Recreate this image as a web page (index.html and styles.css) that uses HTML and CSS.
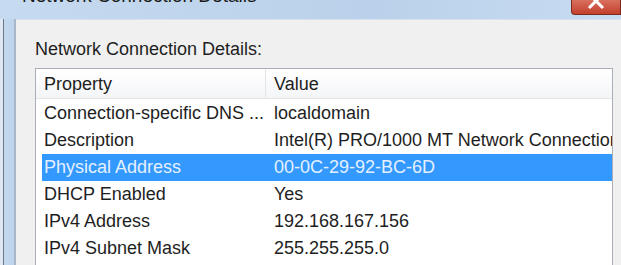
FILE: index.html
```html
<!DOCTYPE html>
<html lang="en">
<head>
  <meta charset="UTF-8">
  <title>Network Connection Details</title>
  <link rel="stylesheet" href="styles.css">
</head>
<body>
  <div class="window">
    <div class="titlebar">
      <span class="title">Network Connection Details</span>
      <div class="close-btn">
        <svg width="20" height="12" viewBox="0 0 20 12">
          <path d="M3 -6 L17 8 M17 -6 L3 8" stroke="#fff" stroke-width="3"/>
        </svg>
      </div>
    </div>
    <div class="frame">
      <div class="frame-side"></div>
      <div class="panel">
        <div class="caption">Network Connection Details:</div>
        <div class="list">
          <div class="list-head">
            <div class="col-prop">Property</div>
            <div class="col-val">Value</div>
          </div>
          <div class="list-body">
            <div class="row"><div class="col-prop">Connection-specific DNS ...</div><div class="col-val">localdomain</div></div>
            <div class="row"><div class="col-prop">Description</div><div class="col-val">Intel(R) PRO/1000 MT Network Connection</div></div>
            <div class="row selected"><div class="col-prop">Physical Address</div><div class="col-val">00-0C-29-92-BC-6D</div></div>
            <div class="row"><div class="col-prop">DHCP Enabled</div><div class="col-val">Yes</div></div>
            <div class="row"><div class="col-prop">IPv4 Address</div><div class="col-val">192.168.167.156</div></div>
            <div class="row"><div class="col-prop">IPv4 Subnet Mask</div><div class="col-val">255.255.255.0</div></div>
          </div>
        </div>
      </div>
    </div>
  </div>
</body>
</html>
```

FILE: styles.css
```css
/* Reset */
* {
  box-sizing: border-box;
  margin: 0;
  padding: 0;
}

body {
  font-family: 'Liberation Sans', Arial, sans-serif;
  color: #1e1e1e;
  background-color: #f0f0f0;
  width: 621px;
  height: 265px;
  overflow: hidden;
}

.window {
  display: flex;
  flex-direction: column;
  height: 265px;
  background: linear-gradient(to right, #c6daf0, #b9d1ea 60%, #c8dcf1);
}

/* Title bar */
.titlebar {
  display: flex;
  height: 19px;
  overflow: hidden;
  padding-left: 22px;
}

.title {
  font-size: 19px;
  line-height: 20px;
  margin-top: -14px;
  color: #1a1a1a;
  white-space: nowrap;
}

.close-btn {
  margin-left: auto;
  width: 50px;
  height: 15px;
  background: linear-gradient(to bottom, #d9705f, #c2402c);
  border: 1px solid #7c2a1f;
  border-top: none;
  border-radius: 0 0 0 4px;
  display: flex;
  justify-content: center;
  align-items: flex-start;
}

/* Frame */
.frame {
  flex: 1;
  display: flex;
  min-height: 0;
}

.frame-side {
  width: 16px;
  background: linear-gradient(to right, #dfe8f2 0, #dfe8f2 3px, #6b7b8c 3px, #6b7b8c 4px, #c3d8ef 4px, #bed4ec 14px, #a9b8c8 14px);
}

.panel {
  flex: 1;
  display: flex;
  flex-direction: column;
  background-color: #f0f0f0;
  border-top: 1px solid #d6e2ee;
  padding: 17px 8px 0 19px;
  min-width: 0;
}

.caption {
  font-size: 18px;
  line-height: 24px;
  margin-bottom: 7px;
}

/* List view */
.list {
  flex: 1;
  background-color: #ffffff;
  border: 1px solid #a9afb6;
  border-bottom: none;
  overflow: hidden;
  font-size: 18px;
}

.list-head {
  display: flex;
  height: 30px;
  line-height: 30px;
  background: linear-gradient(to bottom, #ffffff, #f4f5f7);
  border-bottom: 1px solid #e5e5e5;
}

.list-head .col-prop {
  border-right: 1px solid #e3e5e8;
}

.list-body {
  padding-top: 1px;
}

.col-prop {
  width: 230px;
  flex-shrink: 0;
  padding-left: 8px;
  white-space: nowrap;
  overflow: hidden;
}

.col-val {
  flex: 1;
  padding-left: 8px;
  white-space: nowrap;
  overflow: hidden;
}

.row {
  display: flex;
  height: 27px;
  line-height: 27px;
  margin-left: 6px;
}

.row .col-prop {
  width: 224px;
  padding-left: 2px;
}

.row.selected {
  background-color: #3399ff;
  color: #e4f0ff;
}
```
